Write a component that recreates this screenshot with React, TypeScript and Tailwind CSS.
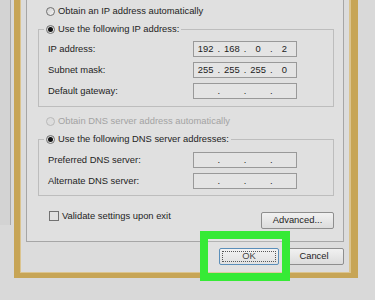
import React from 'react'

function Radio({ checked = false, disabled = false }: { checked?: boolean; disabled?: boolean }) {
  return (
    <span
      className={`flex h-[9px] w-[9px] shrink-0 items-center justify-center rounded-full border ${
        disabled ? 'border-[#b9b9b9] bg-[#dddddd]' : 'border-[#6f6f6f] bg-gradient-to-br from-[#d0d0d0] to-[#f4f4f4]'
      }`}
    >
      {checked && <span className="h-[5px] w-[5px] rounded-full bg-[#111111]" />}
    </span>
  )
}

function IpBox({ parts = ['', '', '', ''] }: { parts?: string[] }) {
  return (
    <div className="flex h-[16px] w-[104px] items-center border border-[#999999] bg-[#e4e4e4] text-[#1c1c1c]">
      {parts.map((p, i) => (
        <React.Fragment key={i}>
          {i > 0 && <span className="w-[3px] text-center leading-none">.</span>}
          <span className="flex-1 text-center leading-none">{p}</span>
        </React.Fragment>
      ))}
    </div>
  )
}

function FieldRow({ label, parts }: { label: string; parts?: string[] }) {
  return (
    <div className="ml-[4px] flex h-[16px] items-center">
      <span className="w-[145px]">{label}</span>
      <IpBox parts={parts} />
    </div>
  )
}

function Button({ label, width, focused = false }: { label: string; width: string; focused?: boolean }) {
  return (
    <div
      className={`flex h-[17px] items-center justify-center rounded-[2px] border bg-gradient-to-b from-[#f1f1f1] to-[#dcdcdc] p-[2px] ${width} ${
        focused ? 'border-[#3f7cae]' : 'border-[#8e8e8e]'
      }`}
    >
      <div
        className={`flex h-full w-full items-center justify-center ${
          focused ? 'border border-dotted border-[#3a3a3a]' : ''
        }`}
      >
        {label}
      </div>
    </div>
  )
}

export default function App() {
  return (
    <div className="relative h-[300px] w-[375px] overflow-hidden bg-[#d9d9d9] font-['Liberation_Sans',Arial,sans-serif] text-[9.4px] text-[#1e1e1e]">
      <div className="flex">
        {/* window behind the dialog */}
        <div className="w-[14px]">
          <div className="h-[225px] w-[11px] border-r border-[#ababab] bg-[#d3d3d3]" />
        </div>

        {/* dialog frame */}
        <div className="h-[278px] w-[344px] border-b-[5px] border-l-[6px] border-r-[7px] border-[#c7a556]">
          <div className="flex h-full flex-col border-b border-l border-r-2 border-[#dbc48f] bg-[#dcdcdc] pl-[5px] pr-[5px]">
            {/* tab panel */}
            <div className="h-[242px] border-x border-b border-[#a6a6a6] bg-[#e0e0e0]">
              <div className="ml-[19px] mt-[5px] flex h-[12px] items-center gap-[3px]">
                <Radio />
                <span>Obtain an IP address automatically</span>
              </div>

              <fieldset className="ml-[11px] mt-[6px] w-[296px] border border-[#bdbdbd] px-[5px] pb-[7px] pt-[6px]">
                <legend className="px-[2px]">
                  <span className="flex h-[12px] items-center gap-[3px]">
                    <Radio checked />
                    <span>Use the following IP address:</span>
                  </span>
                </legend>
                <div className="flex flex-col gap-[5px]">
                  <FieldRow label="IP address:" parts={['192', '168', '0', '2']} />
                  <FieldRow label="Subnet mask:" parts={['255', '255', '255', '0']} />
                  <FieldRow label="Default gateway:" />
                </div>
              </fieldset>

              <div className="ml-[19px] mt-[8px] flex h-[12px] items-center gap-[3px] text-[#a3a3a3]">
                <Radio disabled />
                <span>Obtain DNS server address automatically</span>
              </div>

              <fieldset className="ml-[11px] mt-[6px] w-[296px] border border-[#bdbdbd] px-[5px] pb-[6px] pt-[7px]">
                <legend className="px-[2px]">
                  <span className="flex h-[12px] items-center gap-[3px]">
                    <Radio checked />
                    <span>Use the following DNS server addresses:</span>
                  </span>
                </legend>
                <div className="flex flex-col gap-[5px]">
                  <FieldRow label="Preferred DNS server:" />
                  <FieldRow label="Alternate DNS server:" />
                </div>
              </fieldset>

              <div className="ml-[22px] mr-[9px] mt-[15px] flex items-start justify-between">
                <div className="flex h-[10px] items-center gap-[3px]">
                  <span className="h-[10px] w-[10px] border border-[#727272] bg-[#e2e2e2]" />
                  <span>Validate settings upon exit</span>
                </div>
                <div className="mt-[1px]">
                  <Button label="Advanced..." width="w-[73px] h-[16px]" />
                </div>
              </div>
            </div>

            {/* dialog buttons */}
            <div className="mt-[6px] flex justify-end gap-[5px]">
              <Button label="OK" width="w-[60px]" focused />
              <Button label="Cancel" width="w-[60px]" />
            </div>
          </div>
        </div>
      </div>

      {/* green highlight around OK */}
      <div className="absolute left-[200px] top-[231px] h-[50px] w-[90px] border-[8px] border-[#36ea36] bg-white/15" />
    </div>
  )
}
